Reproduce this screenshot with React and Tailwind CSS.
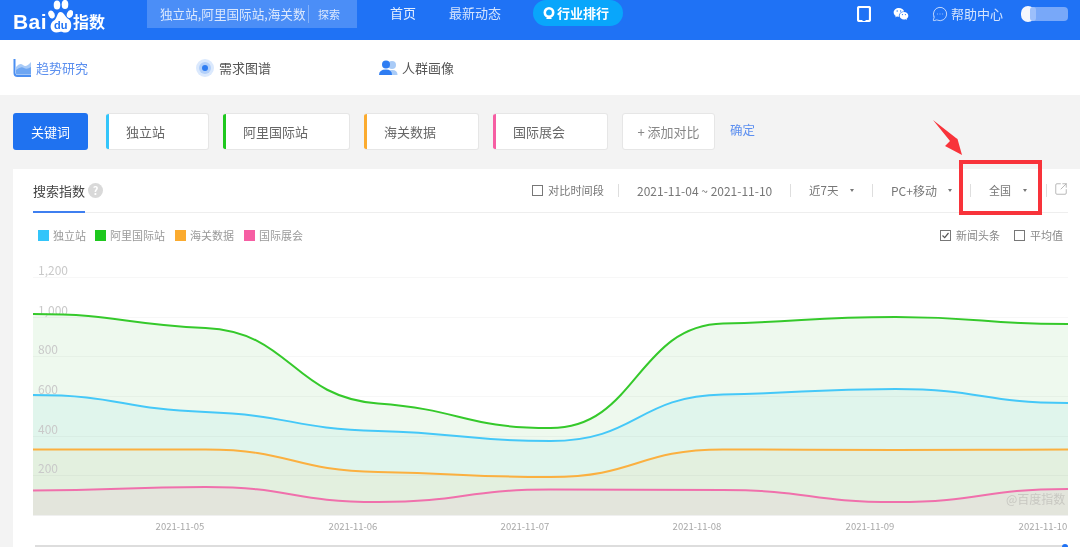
import React from "react";
import { MessageCircleMore, SquareArrowOutUpRight } from "lucide-react";
import { RiWechatFill } from "react-icons/ri";

const XS = [33, 205.5, 378, 550.5, 723, 895.5, 1068];
const SERIES = [
  { color: "#35c92b", fill: "#eef9ee", ys: [314, 328, 403.5, 428, 323.5, 317, 324] },
  { color: "#45c8f8", fill: "#e0f5ec", ys: [395, 412, 431, 441, 394.5, 389, 403] },
  { color: "#fbb040", fill: "#e3f0df", ys: [449.5, 449.5, 472, 477, 449.5, 450, 449.5] },
  { color: "#f070ac", fill: "#e3e5dc", ys: [490.5, 487, 502, 489.5, 490, 502, 489] },
];

function linePath(ys) {
  const dx = XS[1] - XS[0];
  const s = ys.slice(1).map((y, i) => (y - ys[i]) / dx);
  const m = ys.map((_, i) => {
    if (i === 0 || i === ys.length - 1) return 0;
    const a = s[i - 1];
    const b = s[i];
    return a * b <= 0 ? 0 : (0.7 * a * b) / (a + b);
  });
  let d = `M${XS[0]} ${ys[0]}`;
  for (let i = 0; i < ys.length - 1; i++) {
    const h = dx * 0.5;
    d += ` C${XS[i] + h} ${ys[i] + m[i] * h} ${XS[i + 1] - h} ${ys[i + 1] - m[i + 1] * h} ${XS[i + 1]} ${ys[i + 1]}`;
  }
  return d;
}

function Logo() {
  return (
    <div className="flex items-center ml-[13px] w-[92px] h-10 shrink-0 text-white">
      <span className="font-['Liberation_Sans',sans-serif] font-bold text-[21px] leading-none mt-[2px] tracking-[0.4px] w-[35px] shrink-0">Bai</span>
      <svg width="25" height="36" viewBox="0 0 25 36" className="mt-[-4px] shrink-0">
        <ellipse cx="3.5" cy="14.5" rx="3" ry="4" fill="#fff" transform="rotate(-25 3.5 14.5)" />
        <ellipse cx="9" cy="5" rx="3.3" ry="4.6" fill="#fff" />
        <ellipse cx="17" cy="4.5" rx="3.3" ry="4.6" fill="#fff" />
        <ellipse cx="22" cy="14" rx="3" ry="4" fill="#fff" transform="rotate(25 22 14)" />
        <path d="M12.5 12 C16 12 17 17 20.5 19 C24.5 21.5 24.5 32 18 32.5 C15.5 32.8 14.5 31.6 12.5 31.8 C10 32.2 7.5 33.2 5 31.5 C1 28.5 2.5 22 6 20.5 C9 19 9 12 12.5 12 Z" fill="#fff" />
        <text x="12.8" y="29" textAnchor="middle" fontSize="11" fontWeight="700" fill="#1f72f5" fontFamily="Liberation Sans">du</text>
      </svg>
      <span className="font-bold text-[16px] leading-none mt-[2px] whitespace-nowrap">指数</span>
    </div>
  );
}

function Header() {
  return (
    <header className="flex h-10 bg-[#1f72f5] text-white shrink-0">
      <Logo />
      <div className="ml-[42px] flex items-center h-7 w-[210px] bg-[#4b8ef7] shrink-0">
        <span className="ml-[13px] w-[148px] text-[12.6px] text-[#dbe8fd] whitespace-nowrap">独立站,阿里国际站,海关数</span>
        <span className="w-px h-[18px] bg-[#85b2fa]" />
        <span className="ml-[9px] text-[11px] text-[#dbe8fd]">探索</span>
      </div>
      <span className="ml-[33px] text-[13px] leading-[26px] text-[#e4eefe] whitespace-nowrap">首页</span>
      <span className="ml-[33px] text-[13px] leading-[26px] text-[#d5e4fd] whitespace-nowrap">最新动态</span>
      <div className="ml-[32px] flex items-center w-[90px] h-[26px] rounded-r-full rounded-l-full bg-[#09a6fb] shrink-0">
        <svg width="14" height="14" viewBox="0 0 14 14" className="ml-[9px]">
          <circle cx="7" cy="6.5" r="4.2" fill="none" stroke="#fff" strokeWidth="2.6" />
          <path d="M4 13 L7 9.5 L10 13 Z" fill="#fff" />
        </svg>
        <span className="ml-[1px] text-[13px] font-bold whitespace-nowrap">行业排行</span>
      </div>
      <div className="ml-auto flex items-center h-7 mr-[12px]">
        <svg width="14" height="16" viewBox="0 0 14 16">
          <rect x="1" y="1" width="12" height="14" rx="1.5" fill="none" stroke="#fff" strokeWidth="2.2" />
          <rect x="5.5" y="13" width="3" height="2" fill="#1f72f5" />
        </svg>
        <RiWechatFill className="ml-[22px] text-[16px]" />
        <MessageCircleMore className="ml-[23px] w-4 h-4 text-[#d5e4fd]" strokeWidth={1.3} />
        <span className="ml-[3px] text-[13px] text-[#d5e4fd] whitespace-nowrap">帮助中心</span>
        <div className="relative ml-[18px] w-[47px] h-[14px]">
          <div className="absolute left-[8px] right-0 top-0 bottom-0 rounded-sm bg-[#78a8f9]" />
          <div className="absolute left-0 -top-px w-[14px] h-4 rounded-full bg-[#f4f7fd]" />
          <div className="absolute left-[9px] top-0 w-[6px] h-[14px] rounded-full bg-[#9cbffb]" />
        </div>
      </div>
    </header>
  );
}

function SubNav() {
  return (
    <nav className="flex items-center h-[55px] bg-white shrink-0 text-[13px]">
      <svg width="19" height="18" viewBox="0 0 19 18" className="ml-[13px] shrink-0">
        <path d="M1.5 0 V14 Q1.5 17 4.5 17 H18" fill="none" stroke="#4b8ff2" strokeWidth="2" />
        <path d="M3 8 Q7 3 10 6 T18 3 V15.5 H4 Q3 15.5 3 14 Z" fill="#a9cbf7" />
        <path d="M3 11 Q8 7 11 9 T18 8 V15.5 H4 Q3 15.5 3 14 Z" fill="#6ea6f2" />
      </svg>
      <span className="ml-[4px] w-[51px] text-[#5c90ef] whitespace-nowrap">趋势研究</span>
      <svg width="18" height="18" viewBox="0 0 18 18" className="ml-[109px] shrink-0">
        <circle cx="9" cy="9" r="9" fill="#dbe9fd" />
        <circle cx="9" cy="9" r="6" fill="#b3d0fa" />
        <circle cx="9" cy="9" r="3" fill="#2f7df2" />
      </svg>
      <span className="ml-[5px] w-[51px] text-[#555] whitespace-nowrap">需求图谱</span>
      <svg width="19" height="16" viewBox="0 0 19 16" className="ml-[109px] shrink-0">
        <circle cx="13" cy="5" r="4" fill="#a9cbf7" />
        <path d="M8 15 Q8 10 13 10 Q18.5 10 18.5 15 Z" fill="#a9cbf7" />
        <circle cx="7" cy="4.5" r="4" fill="#2f7df2" />
        <path d="M0 15 Q0 9.5 7 9.5 Q13 9.5 13 15 Z" fill="#2f7df2" />
      </svg>
      <span className="ml-[4px] text-[#555] whitespace-nowrap">人群画像</span>
    </nav>
  );
}

function Tab({ color, label, width }) {
  return (
    <div className={`flex h-[37px] bg-white rounded-[3px] border border-l-0 border-[#e6e6e6] overflow-hidden shrink-0 ${width}`}>
      <span className={`w-[3px] h-full shrink-0 ${color}`} />
      <span className="ml-[17px] text-[13px] leading-[35px] text-[#666] whitespace-nowrap">{label}</span>
    </div>
  );
}

function Tabs() {
  return (
    <section className="flex items-start gap-[14px] h-[74px] pt-[18px] pl-[13px] bg-[#f3f3f3] shrink-0">
      <div className="w-[75px] h-[37px] mr-[4px] bg-[#1f72f0] rounded-[3px] text-white text-[13px] leading-[37px] text-center shrink-0">关键词</div>
      <Tab color="bg-[#33c5fa]" label="独立站" width="w-[103px]" />
      <Tab color="bg-[#1ec81e]" label="阿里国际站" width="w-[127px]" />
      <Tab color="bg-[#fbab2f]" label="海关数据" width="w-[115px]" />
      <Tab color="bg-[#f65ea3]" label="国际展会" width="w-[115px]" />
      <div className="w-[93px] h-[37px] bg-white rounded-[3px] border border-[#e6e6e6] text-[13px] leading-[35px] text-center text-[#888] whitespace-nowrap shrink-0">+ 添加对比</div>
      <span className="ml-px text-[12.5px] leading-[33px] text-[#5c8ff0] whitespace-nowrap">确定</span>
    </section>
  );
}

const Sep = ({ className }) => <span className={`w-px h-[13px] bg-[#dedede] shrink-0 ${className}`} />;
const Caret = ({ className }) => (
  <span className={`w-0 h-0 border-x-[2px] border-t-[3px] border-x-transparent border-t-[#777] shrink-0 ${className}`} />
);
const Box = ({ checked, className }) => (
  <span className={`flex items-center justify-center w-[11px] h-[11px] border border-[#777] shrink-0 ${className}`}>
    {checked && (
      <svg width="9" height="9" viewBox="0 0 9 9">
        <path d="M1.5 4.5 L3.7 6.7 L7.5 2" fill="none" stroke="#555" strokeWidth="1.2" />
      </svg>
    )}
  </span>
);

function TitleRow() {
  return (
    <div className="flex items-center h-[44px] border-b border-[#eeeeee] mr-[12px] relative text-[11px] text-[#777]">
      <span className="text-[13px] text-[#444] whitespace-nowrap">搜索指数</span>
      <span className="ml-[3px] flex items-center justify-center w-[15px] h-[15px] rounded-full bg-[#d9d9d9] text-white text-[11px] font-bold">?</span>
      <span className="absolute left-0 bottom-[-1px] w-[52px] h-[2px] bg-[#3f7ff0]" />
      <div className="ml-auto flex items-center whitespace-nowrap">
        <Box />
        <span className="ml-[5px] w-[56px] text-[11.2px]">对比时间段</span>
        <Sep className="ml-[14px]" />
        <span className="ml-[18px] w-[137px] text-[12px]">2021-11-04 ~ 2021-11-10</span>
        <Sep className="ml-[16px]" />
        <span className="ml-[18px] w-[29px] text-[11.5px]">近7天</span>
        <Caret className="ml-[12px]" />
        <Sep className="ml-[18px]" />
        <span className="ml-[18px] w-[46px] text-[12px]">PC+移动</span>
        <Caret className="ml-[11px]" />
        <Sep className="ml-[18px]" />
        <span className="ml-[18px] w-[22px]">全国</span>
        <Caret className="ml-[12px]" />
        <Sep className="ml-[19px]" />
        <SquareArrowOutUpRight className="ml-[7px] w-[14px] h-[14px] text-[#aaa] -mt-[3px]" strokeWidth={1.4} />
      </div>
    </div>
  );
}

function Legend() {
  const items = [
    ["bg-[#33c5fa]", "独立站", "ml-[5px]"],
    ["bg-[#1ec81e]", "阿里国际站", "ml-[9px]"],
    ["bg-[#fbab2f]", "海关数据", "ml-[10px]"],
    ["bg-[#f65ea3]", "国际展会", "ml-[10px]"],
  ];
  return (
    <div className="flex items-center h-[45px] mr-[12px] text-[11px] text-[#999]">
      {items.map(([c, t, m]) => (
        <div key={t} className={`flex items-center ${m}`}>
          <span className={`w-[11px] h-[11px] ${c}`} />
          <span className="ml-[4px] whitespace-nowrap">{t}</span>
        </div>
      ))}
      <div className="ml-auto mr-[5px] flex items-center whitespace-nowrap text-[#888]">
        <Box checked />
        <span className="ml-[5px]">新闻头条</span>
        <Box className="ml-[14px]" />
        <span className="ml-[5px]">平均值</span>
      </div>
    </div>
  );
}

function Chart() {
  const grid = [
    [277, "1,200"],
    [317, "1,000"],
    [356, "800"],
    [396, "600"],
    [436, "400"],
    [475, "200"],
  ];
  const dates = [
    [180, "2021-11-05"],
    [353, "2021-11-06"],
    [525, "2021-11-07"],
    [697, "2021-11-08"],
    [870, "2021-11-09"],
    [1043, "2021-11-10"],
  ];
  return (
    <svg width="1035" height="276" viewBox="33 258 1035 276" className="block shrink-0">
      {SERIES.map((s) => (
        <path key={s.color} d={`${linePath(s.ys)} L1068 515 L33 515 Z`} fill={s.fill} />
      ))}
      {grid.map(([y, t]) => (
        <g key={t}>
          <line x1="33" x2="1068" y1={y + 0.5} y2={y + 0.5} stroke="#000" strokeOpacity="0.03" />
          <text x="38" y={y - 2} fontSize="12" fill="#c9c9c9">{t}</text>
        </g>
      ))}
      <line x1="33" x2="1068" y1="515.5" y2="515.5" stroke="#f0f0f0" />
      {SERIES.map((s) => (
        <path key={s.color} d={linePath(s.ys)} fill="none" stroke={s.color} strokeWidth="2" />
      ))}
      <text x="1006" y="504" fontSize="12" fill="#c8c8c2">@百度指数</text>
      {dates.map(([x, t]) => (
        <text key={t} x={x} y="530" fontSize="9.5" fill="#a8a8a8" textAnchor="middle">{t}</text>
      ))}
    </svg>
  );
}

function Card() {
  return (
    <section className="flex-1 ml-[13px] pl-5 bg-white min-h-0">
      <TitleRow />
      <Legend />
      <Chart />
      <div className="relative mt-[11px] ml-[2px] mr-[12px] h-[2px] bg-[#dddddd]">
        <span className="absolute right-0 -top-[1px] w-[6px] h-[6px] rounded-full bg-[#1f72f5]" />
      </div>
    </section>
  );
}

export default function App() {
  return (
    <div className="relative flex flex-col w-[1080px] h-[547px] overflow-hidden bg-[#f3f3f3] blur-[0.45px] font-['Noto_Sans_CJK_SC','Noto_Sans',sans-serif]">
      <Header />
      <SubNav />
      <Tabs />
      <Card />
      <div className="absolute left-[959px] top-[160px] w-[83px] h-[55px] border-[4px] border-[#f8333a]" />
      <svg width="40" height="45" viewBox="0 0 40 45" className="absolute left-[928px] top-[115px]">
        <path d="M5 5 L28 23 L29.5 24 L34 40 L17 31 L22 26 Z" fill="#f8333a" />
      </svg>
    </div>
  );
}
